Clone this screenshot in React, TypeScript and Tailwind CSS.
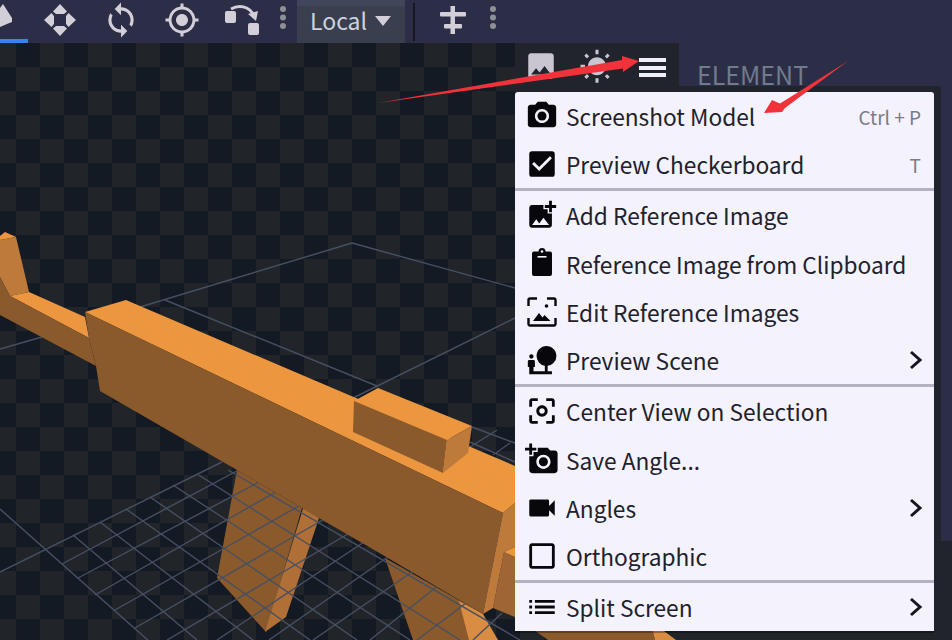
import React from 'react';
import {
  MdAddAPhoto,
  MdAddPhotoAlternate,
  MdCameraAlt,
  MdCenterFocusWeak,
  MdCheckBox,
  MdCheckBoxOutlineBlank,
  MdGpsFixed,
  MdImage,
  MdList,
  MdNaturePeople,
  MdSync,
  MdVideocam,
  MdWbSunny,
} from 'react-icons/md';

// Custom icons that the packages don't have
const ClipboardIcon = () => (
  <svg width="32" height="32" viewBox="0 0 32 32" fill="currentColor">
    <path d="M6 6.5a2 2 0 0 1 2-2h4.5a3.5 3.5 0 0 1 7 0H24a2 2 0 0 1 2 2V27a2 2 0 0 1-2 2H8a2 2 0 0 1-2-2z" />
    <rect x="11.5" y="9" width="9" height="1.6" fill="#f3f2fd" />
    <circle cx="16" cy="4.5" r="1.3" fill="#f3f2fd" />
  </svg>
);

const EditImagesIcon = () => (
  <svg width="32" height="32" viewBox="0 0 32 32" fill="currentColor">
    <path d="M2.500 10V4A1.500 1.500 0 0 1 4 2.500H11M21 2.500h7A1.500 1.500 0 0 1 29.500 4V10M29.500 22v6a1.500 1.500 0 0 1-1.500 1.500H4A1.500 1.500 0 0 1 2.500 28V22" fill="none" stroke="currentColor" strokeWidth="2.400" />
    <circle cx="20.500" cy="10" r="1.800" />
    <path d="M7 25l6-8 3.500 4.500 2-2.500 6 6z" />
  </svg>
);

const ChevronIcon = () => (
  <svg className="-mr-[2px]" width="14" height="20" viewBox="0 0 14 20" fill="none" stroke="#15151c" strokeWidth="3">
    <path d="M2 2l9 8-9 8" />
  </svg>
);

const MoreDots = () => (
  <svg width="8" height="26" viewBox="0 0 8 26" fill="#8f8f98">
    <circle cx="4" cy="4" r="3" />
    <circle cx="4" cy="12.500" r="3" />
    <circle cx="4" cy="21" r="3" />
  </svg>
);

const MoveIcon = () => (
  <svg width="34" height="34" viewBox="0 0 34 34" fill="#d2cfd9">
    <path d="M17 1l7 7.500-3 2.500h-8l-3-2.500zM17 33l-7-7.500 3-2.500h8l3 2.500zM1 17l7.500-7 2.500 3v8l-2.500 3zM33 17l-7.500 7-2.500-3v-8l2.500-3z" />
  </svg>
);

const PivotMoveIcon = () => (
  <svg width="38" height="32" viewBox="0 0 38 32" fill="none">
    <rect x="1" y="7" width="11" height="12" rx="2" fill="#d2cfd9" />
    <rect x="24" y="19" width="11" height="12" rx="2" fill="#d2cfd9" />
    <path d="M7 5c7-4 18-4 23 7" stroke="#d2cfd9" strokeWidth="3" />
    <path d="M24 10l8 7 2-10z" fill="#d2cfd9" />
  </svg>
);

const SnapIcon = () => (
  <svg width="28" height="30" viewBox="0 0 28 30" fill="#d2cfd9">
    <rect x="11.500" y="1" width="4.500" height="28" />
    <rect x="1" y="7" width="26" height="4.500" rx="1" />
    <rect x="5" y="19" width="18" height="4.500" rx="1" />
  </svg>
);

// The gun and grid floor, drawn in page coordinates
const gridLines = [
  '0,349 42,337', '140,307 352,243', '352,243 515,288', '165,300 377,386', '353,398 515,318',
  '472,427 515,443', '470,442 515,462', '470,447 497,430', '493,455 510,443',
  '0,572 222,462', '62,564 250,464', '78,578 280,471', '95,595 295,481', '115,610 320,494',
  '135,628 340,510', '167,640 365,524', '217,640 370,538', '269,640 395,552', '313,640 412,572',
  '370,640 445,580', '417,640 470,600', '473,640 502,613',
  '0,509 150,642', '73,535 197,640', '100,522 253,640', '126,509 310,640', '150,497 357,640',
  '173,485 410,640', '197,474 460,640', '228,470 520,640',
];

const ModelScene = () => (
  <svg className="absolute inset-0" width="952" height="597" viewBox="0 43 952 597">
    {/* magazines sit under the grid, the body over it */}
    <polygon points="237,470 302,508 266,632 217,578" fill="#8a5a2c" />
    <polygon points="302,512 303,508 319,518 286,617 265,632" fill="#b06f36" />
    <polygon points="385,558 483,614 469,640 413,640" fill="#8a5a2c" />
    <polygon points="459,601 483,614 498,640 469,640" fill="#d98d42" />
    <polygon points="504,552 515,557 515,617 493,608" fill="#a06534" />
    <polygon points="520,620 650,620 655,640 548,640" fill="#8a5a2c" />
    <polygon points="650,620 660,628 676,640 655,640" fill="#d98d42" />
    <g stroke="#475063" strokeWidth="1.400" fill="none">
      {gridLines.map((line) => (
        <polyline key={line} points={line} />
      ))}
    </g>
    <polygon points="0,236 5,232 16,237 0,240" fill="#ec9640" />
    <polygon points="0,240 16,237 29,292 10,296 0,277" fill="#bd7a3a" />
    <polygon points="10,296 29,292 85,317 89,338" fill="#ec9640" />
    <polygon points="0,277 10,296 89,338 96,366 0,315" fill="#8a5a2c" />
    <polygon points="85,312 126,300 515,466 515,503 503,513" fill="#ec9640" />
    <polygon points="85,312 503,513 483,614 388,558 319,518 302,508 237,470 100,391 96,366 89,338" fill="#8a5a2c" />
    <polygon points="503,513 515,503 515,547 504,552 493,608 483,614" fill="#bd7a3a" />
    <polygon points="504,552 515,547 515,557" fill="#ec9640" />
    <polygon points="354,401 378,388 472,426 447,440" fill="#ec9640" />
    <polygon points="354,401 447,440 443,473 353,432" fill="#8a5a2c" />
    <polygon points="447,440 472,426 468,453 443,473" fill="#bd7a3a" />
  </svg>
);

interface MenuRow {
  label: string;
  icon: React.ReactNode;
  shortcut?: string;
  submenu?: boolean;
}

const sections: MenuRow[][] = [
  [
    { label: 'Screenshot Model', icon: <MdCameraAlt size={34} />, shortcut: 'Ctrl + P' },
    { label: 'Preview Checkerboard', icon: <MdCheckBox size={34} />, shortcut: 'T' },
  ],
  [
    { label: 'Add Reference Image', icon: <MdAddPhotoAlternate size={34} /> },
    { label: 'Reference Image from Clipboard', icon: <ClipboardIcon /> },
    { label: 'Edit Reference Images', icon: <EditImagesIcon /> },
    { label: 'Preview Scene', icon: <MdNaturePeople size={34} />, submenu: true },
  ],
  [
    { label: 'Center View on Selection', icon: <MdCenterFocusWeak size={34} /> },
    { label: 'Save Angle...', icon: <MdAddAPhoto size={34} /> },
    { label: 'Angles', icon: <MdVideocam size={34} />, submenu: true },
    { label: 'Orthographic', icon: <MdCheckBoxOutlineBlank size={34} /> },
  ],
  [{ label: 'Split Screen', icon: <MdList size={34} />, submenu: true }],
];

const Menu = () => (
  <div className="absolute left-[515px] top-[49px] w-[419px] h-[539px] bg-[#f3f2fd] text-[#21212b] rounded-t-[3px] shadow-[7px_-6px_0_0_#21252b,0_2px_0_0_rgba(0,0,0,0.3)]">
    {sections.map((rows, i) => (
      <div key={i} className={i < sections.length - 1 ? 'border-b-[3px] border-[#b5b1c2]' : ''}>
        {rows.map((row) => (
          <div key={row.label} className={i === 0 ? 'flex items-center h-[48px] pl-[10px] pr-[13px]' : 'flex items-center h-[48.25px] pl-[10px] pr-[13px]'}>
            <span className="flex w-[34px] h-[34px] items-center justify-center text-[#08080c] shrink-0">{row.icon}</span>
            <span className="ml-[7px] flex-1 pt-[3px] text-[22.7px] leading-none whitespace-nowrap">{row.label}</span>
            {row.shortcut && <span className="text-[19px] leading-none text-[#7b7b85]">{row.shortcut}</span>}
            {row.submenu && <ChevronIcon />}
          </div>
        ))}
      </div>
    ))}
  </div>
);

const App: React.FC = () => {
  return (
    <div className="relative w-[952px] h-[640px] overflow-hidden flex flex-col bg-[#2c2e47] font-['Noto_Sans_CJK_SC','Noto_Sans',sans-serif]">
      {/* Top toolbar */}
      <div className="flex h-[43px] shrink-0 items-center bg-[#2c2e47] text-[#d2cfd9]">
        <div className="relative h-full w-[28px] border-b-[4px] border-[#3a84f0] overflow-hidden">
          <svg className="absolute left-0 top-[4px]" width="14" height="24" viewBox="0 0 14 24" fill="#d2cfd9">
            <path d="M3 0l9 14v4l-5 2-7 3V4z" />
          </svg>
        </div>
        <span className="ml-[15px] mb-[4px]"><MoveIcon /></span>
        <span className="ml-[25px] mb-[4px]"><MdSync size={38} /></span>
        <span className="ml-[24px] mb-[4px]"><MdGpsFixed size={36} /></span>
        <span className="ml-[24px] mb-[4px]"><PivotMoveIcon /></span>
        <span className="ml-[17px] mb-[8px]"><MoreDots /></span>
        <div className="ml-[10px] flex h-full w-[108px] items-center border-t-[6px] border-[#41465a] bg-[#3a3f4f] pl-[13px] pb-[8px]">
          <span className="text-[23px] leading-none text-[#cfd3dc]">Local</span>
          <span className="ml-[8px] h-0 w-0 border-x-[8px] border-t-[10px] border-x-transparent border-t-[#d2cfd9]" />
        </div>
        <div className="ml-[8px] h-[38px] w-[2px] bg-[#16171f]" />
        <span className="ml-[24px] mb-[4px]"><SnapIcon /></span>
        <span className="ml-[22px] mb-[8px]"><MoreDots /></span>
      </div>

      <div className="flex flex-1 min-h-0">
        {/* 3D viewport */}
        <div className="relative w-[679px] bg-[#141a24] bg-[conic-gradient(#212529_25%,#141a24_0_50%,#212529_0_75%,#141a24_0)] bg-[length:48px_48px] bg-[position:16px_0px]">
          <ModelScene />
          <div className="absolute right-0 top-0 flex h-[49px] w-[164px] bg-[#21252b] text-[#c9c6d2]">
            <span className="ml-[9px] mt-[6px]"><MdImage size={34} /></span>
            <div className="ml-[13px] mr-[5px] flex w-[51px] h-[48px] justify-center border-b-[3px] border-[#3e80e0] pt-[6px]">
              <MdWbSunny size={36} />
            </div>
            <svg className="ml-[12px] mt-[15px]" width="28" height="20" viewBox="0 0 28 20" fill="#f0eef8">
              <rect y="0" width="27" height="4" />
              <rect y="8" width="27" height="4" />
              <rect y="15" width="27" height="4" />
            </svg>
          </div>
        </div>

        {/* Right side panel */}
        <div className="flex flex-1 flex-col">
          <div className="flex-1 pl-[18px] pt-[19px]">
            <div className="text-[25px] leading-none text-[#707b8d]">ELEMENT</div>
          </div>
          <div className="h-[99px] bg-[#21252b]" />
        </div>
      </div>

      {/* Context menu hangs off the bottom area */}
      <div className="absolute left-0 top-[43px]">
        <Menu />
      </div>

      {/* Hand drawn red arrows on the screenshot */}
      <svg className="absolute inset-0 pointer-events-none" width="952" height="640" viewBox="0 0 952 640" fill="#f0333a">
        <polygon points="378,103 622,60 622,56 639,61 623,72 623,68.500" />
        <polygon points="848,61 780,103.500 772,100 764,113 782,112 785,108" />
      </svg>
    </div>
  );
};

export default App;
